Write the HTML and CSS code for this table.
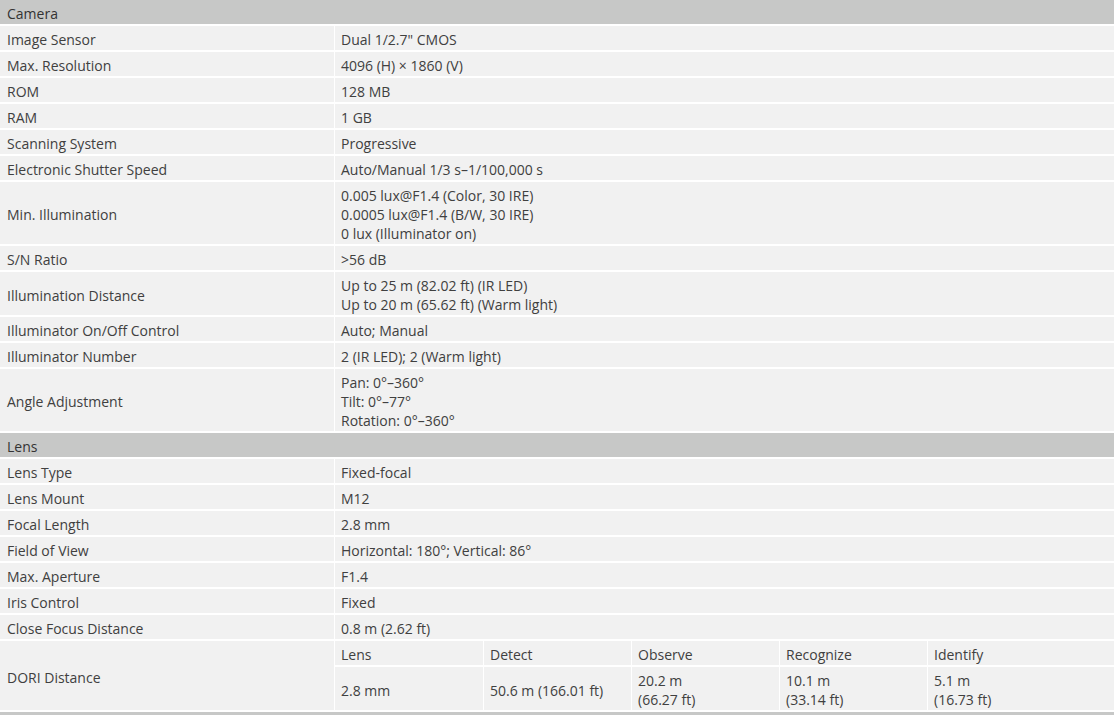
FILE: index.html
```
<!DOCTYPE html>
<html lang="en">
<head>
  <meta charset="UTF-8" />
  <title>Specification</title>
  <link rel="stylesheet" href="styles.css">
</head>
<body>
  <table class="spec-table">
    <colgroup>
      <col class="label-col"><col>
    </colgroup>
    <tr><td class="spec-head" colspan="2">Camera</td></tr>
    <tr><td class="spec-label">Image Sensor</td><td class="spec-val">Dual 1/2.7" CMOS</td></tr>
    <tr><td class="spec-label">Max. Resolution</td><td class="spec-val">4096 (H) × 1860 (V)</td></tr>
    <tr><td class="spec-label">ROM</td><td class="spec-val">128 MB</td></tr>
    <tr><td class="spec-label">RAM</td><td class="spec-val">1 GB</td></tr>
    <tr><td class="spec-label">Scanning System</td><td class="spec-val">Progressive</td></tr>
    <tr><td class="spec-label">Electronic Shutter Speed</td><td class="spec-val">Auto/Manual 1/3 s–1/100,000 s</td></tr>
    <tr><td class="spec-label">Min. Illumination</td><td class="spec-val">0.005 lux@F1.4 (Color, 30 IRE)<br>0.0005 lux@F1.4 (B/W, 30 IRE)<br>0 lux (Illuminator on)</td></tr>
    <tr><td class="spec-label">S/N Ratio</td><td class="spec-val">&gt;56 dB</td></tr>
    <tr><td class="spec-label">Illumination Distance</td><td class="spec-val">Up to 25 m (82.02 ft) (IR LED)<br>Up to 20 m (65.62 ft) (Warm light)</td></tr>
    <tr><td class="spec-label">Illuminator On/Off Control</td><td class="spec-val">Auto; Manual</td></tr>
    <tr><td class="spec-label">Illuminator Number</td><td class="spec-val">2 (IR LED); 2 (Warm light)</td></tr>
    <tr><td class="spec-label">Angle Adjustment</td><td class="spec-val">Pan: 0°–360°<br>Tilt: 0°–77°<br>Rotation: 0°–360°</td></tr>

    <tr><td class="spec-head" colspan="2">Lens</td></tr>
    <tr><td class="spec-label">Lens Type</td><td class="spec-val">Fixed-focal</td></tr>
    <tr><td class="spec-label">Lens Mount</td><td class="spec-val">M12</td></tr>
    <tr><td class="spec-label">Focal Length</td><td class="spec-val">2.8 mm</td></tr>
    <tr><td class="spec-label">Field of View</td><td class="spec-val">Horizontal: 180°; Vertical: 86°</td></tr>
    <tr><td class="spec-label">Max. Aperture</td><td class="spec-val">F1.4</td></tr>
    <tr><td class="spec-label">Iris Control</td><td class="spec-val">Fixed</td></tr>
    <tr><td class="spec-label">Close Focus Distance</td><td class="spec-val">0.8 m (2.62 ft)</td></tr>
    <tr>
      <td class="spec-label">DORI Distance</td>
      <td class="spec-val nested-cell">
        <table class="dori-table">
          <colgroup>
            <col class="dori-col"><col class="dori-col"><col class="dori-col"><col class="dori-col"><col>
          </colgroup>
          <tr class="dori-head">
            <td>Lens</td><td>Detect</td><td>Observe</td><td>Recognize</td><td>Identify</td>
          </tr>
          <tr>
            <td>2.8 mm</td><td>50.6 m (166.01 ft)</td><td>20.2 m<br>(66.27 ft)</td><td>10.1 m<br>(33.14 ft)</td><td>5.1 m<br>(16.73 ft)</td>
          </tr>
        </table>
      </td>
    </tr>
  </table>
</body>
</html>
```

FILE: styles.css
```
* {
  box-sizing: border-box;
}

body {
  margin: 0;
  background: #ffffff;
  font-family: 'Open Sans', sans-serif;
  font-size: 14px;
  line-height: 19px;
  color: #404040;
}

.spec-table {
  width: 100%;
  border-collapse: separate;
  border-spacing: 0;
  table-layout: fixed;
  border-bottom: 4px solid #c7c8c7;
}

.label-col {
  width: 334px;
}

.spec-table td {
  background: #f1f1f1;
  border-bottom: 2px solid #ffffff;
  padding: 4px 6px 1px 7px;
  vertical-align: middle;
  text-align: left;
}

.spec-table .spec-head {
  background: #c7c8c7;
  color: #333333;
}

.spec-table .spec-val {
  border-left: 1px solid #ffffff;
  padding-left: 6px;
}

.spec-table .nested-cell {
  padding: 0;
}

.dori-table {
  width: 100%;
  border-collapse: separate;
  border-spacing: 0;
  table-layout: fixed;
}

.dori-col {
  width: 148px;
}

.dori-table td {
  padding: 4px 6px 1px 6px;
  border-bottom: none;
  border-left: 1px solid #ffffff;
}

.dori-table td:first-child {
  border-left: none;
}

.dori-table .dori-head td {
  border-bottom: 2px solid #ffffff;
}
```
